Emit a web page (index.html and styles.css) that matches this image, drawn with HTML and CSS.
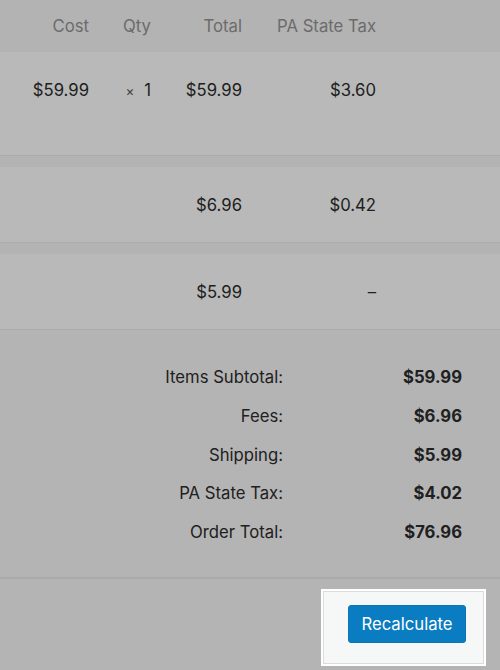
FILE: index.html
```html
<!DOCTYPE html>
<html>
<head>
<meta charset="utf-8">
<link rel="stylesheet" href="styles.css">
</head>
<body>
<div class="page">
  <div class="row head">
    <span class="c cost">Cost</span>
    <span class="c qty">Qty</span>
    <span class="c total">Total</span>
    <span class="c tax">PA State Tax</span>
  </div>
  <div class="row item">
    <span class="c cost">$59.99</span>
    <span class="c qty"><small class="times">×</small> 1</span>
    <span class="c total">$59.99</span>
    <span class="c tax">$3.60</span>
  </div>
  <div class="spacer"></div>
  <div class="row fee">
    <span class="c cost"></span>
    <span class="c qty"></span>
    <span class="c total">$6.96</span>
    <span class="c tax">$0.42</span>
  </div>
  <div class="spacer"></div>
  <div class="row fee">
    <span class="c cost"></span>
    <span class="c qty"></span>
    <span class="c total">$5.99</span>
    <span class="c tax">–</span>
  </div>
  <div class="totals">
    <div class="trow"><span class="label">Items Subtotal:</span><span class="val">$59.99</span></div>
    <div class="trow"><span class="label">Fees:</span><span class="val">$6.96</span></div>
    <div class="trow"><span class="label">Shipping:</span><span class="val">$5.99</span></div>
    <div class="trow"><span class="label">PA State Tax:</span><span class="val">$4.02</span></div>
    <div class="trow"><span class="label">Order Total:</span><span class="val">$76.96</span></div>
  </div>
  <div class="actions">
    <div class="highlight">
      <button class="btn">Recalculate</button>
    </div>
  </div>
</div>
</body>
</html>
```
FILE: styles.css
```css
html, body {
  margin: 0;
  padding: 0;
  background: #b4b4b4;
}
body {
  font-family: Inter, "Liberation Sans", sans-serif;
  font-size: 16.7px;
  color: #202020;
  width: 500px;
  height: 670px;
  overflow: hidden;
}
.page {
  display: flex;
  flex-direction: column;
}
.row {
  display: grid;
  grid-template-columns: 89px 62px 91px 134px 1fr;
  align-items: center;
}
.c {
  text-align: right;
  white-space: nowrap;
}
.head {
  height: 52px;
  background: #b3b3b3;
  color: #6b6b6b;
}
.item {
  height: 104px;
  box-sizing: border-box;
  padding-top: 28px;
  align-items: start;
  background: #b8b9b8;
  border-bottom: 1px solid #aaabaa;
}
.fee {
  height: 75px;
  background: #b8b9b8;
  border-bottom: 1px solid #aaabaa;
}
.spacer {
  height: 11px;
  background: #b3b3b3;
}
.times {
  font-size: 13.5px;
  color: #444;
  margin-right: 5px;
}
.totals {
  height: 249px;
  box-sizing: border-box;
  padding-top: 28px;
  background: #b4b4b4;
  border-bottom: 2px solid #aaaaaa;
}
.trow {
  display: grid;
  grid-template-columns: 283px 179px;
  height: 38.7px;
  align-items: center;
}
.label {
  text-align: right;
}
.val {
  text-align: right;
  font-weight: 700;
}
.actions {
  height: 90px;
  display: flex;
  justify-content: flex-end;
  padding-top: 10px;
  padding-right: 14px;
  box-sizing: border-box;
  background: #b4b4b4;
}
.highlight {
  width: 165px;
  height: 77px;
  box-sizing: border-box;
  border: 2px solid #ffffff;
  box-shadow: inset 0 0 0 1px #dcdcdc;
  background: #f6f7f7;
  display: flex;
  align-items: flex-start;
  justify-content: center;
  padding-top: 14px;
  padding-left: 7px;
}
.btn {
  font-family: inherit;
  font-size: 16.7px;
  color: #ffffff;
  background: #0a7cc1;
  border: 1px solid #0a76b8;
  border-radius: 3px;
  width: 118px;
  height: 38px;
  padding: 0;
}
```
